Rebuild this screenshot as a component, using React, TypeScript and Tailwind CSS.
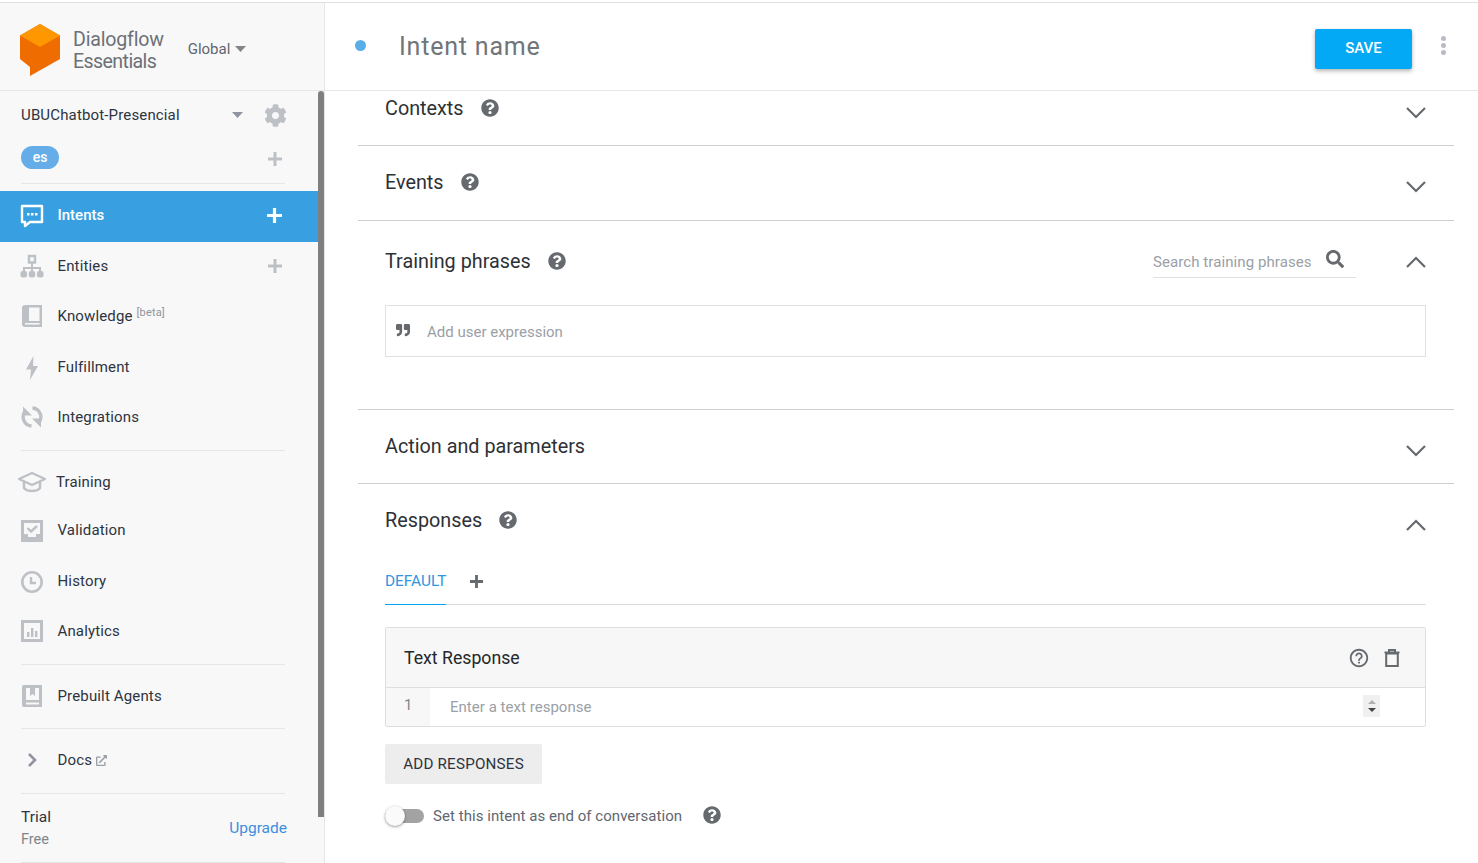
import React from "react";
import { FaCog, FaQuestionCircle, FaQuoteRight, FaSearch, FaExternalLinkAlt } from "react-icons/fa";
import { MdHelpOutline } from "react-icons/md";

const ICON = "#bdc1c6";

const Plus = ({ size = 16, color = "#bdc1c6", width = 3 }: { size?: number; color?: string; width?: number }) => (
  <svg width={size} height={size} viewBox="0 0 16 16">
    <path d="M8 1v14M1 8h14" stroke={color} strokeWidth={width} fill="none" />
  </svg>
);

const Caret = ({ color = "#80868b" }: { color?: string }) => (
  <svg width="11" height="6" viewBox="0 0 11 6">
    <path d="M0 0h11L5.5 6z" fill={color} />
  </svg>
);

const Chevron = ({ up = false }: { up?: boolean }) => (
  <svg width="20" height="12" viewBox="0 0 20 12">
    <path d={up ? "M1 11l9-9 9 9" : "M1 1l9 9 9-9"} stroke="#666a6e" strokeWidth="2.2" fill="none" />
  </svg>
);

const Logo = () => (
  <svg width="42" height="52" viewBox="0 0 42 52">
    <path d="M21 0L41 11.5V35L11 52V43L1 35V11.5z" fill="#ef6c00" />
    <path d="M21 0L41 11.5 21 23 1 11.5z" fill="#ff9800" />
  </svg>
);

const IntentIcon = () => (
  <svg width="24" height="24" viewBox="0 0 24 24">
    <path d="M2 2h20v16H10l-5 4v-4H2z" fill="none" stroke="#fff" strokeWidth="2.4" strokeLinejoin="round" />
    <path d="M7 9h2.5v2.5H7zM11 9h2.5v2.5H11zM15 9h2.5v2.5H15z" fill="#fff" />
  </svg>
);

const SitemapIcon = () => (
  <svg width="24" height="24" viewBox="0 0 24 24">
    <rect x="9" y="2" width="6" height="6.5" fill="none" stroke={ICON} strokeWidth="2.4" />
    <path d="M12 9v8M4 18v-4h16v4" fill="none" stroke={ICON} strokeWidth="2" />
    <rect x="0.5" y="17" width="6.5" height="6.5" rx="2" fill={ICON} />
    <rect x="8.75" y="17" width="6.5" height="6.5" rx="2" fill={ICON} />
    <rect x="17" y="17" width="6.5" height="6.5" rx="2" fill={ICON} />
  </svg>
);

const BookIcon = () => (
  <svg width="22" height="24" viewBox="0 0 22 24">
    <path d="M4 1h17v22H4a3 3 0 0 1-3-3V4a3 3 0 0 1 3-3z" fill={ICON} />
    <path d="M8 3.5h10.5V17H8z" fill="#f8f8f8" />
    <path d="M4 19h14.5v1.5H4z" fill="#f8f8f8" />
  </svg>
);

const BoltIcon = () => (
  <svg width="14" height="24" viewBox="0 0 14 24">
    <path d="M8.5 0L1 13.5h5L5 24l8-14H8z" fill={ICON} />
  </svg>
);

const SyncIcon = () => (
  <svg width="24" height="24" viewBox="0 0 24 24">
    <path d="M11.5 21A9 9 0 0 1 5.5 6" stroke={ICON} strokeWidth="3.4" fill="none" />
    <path d="M12.5 3A9 9 0 0 1 18.5 18" stroke={ICON} strokeWidth="3.4" fill="none" />
    <path d="M3 1.5v9h9zM21 22.5v-9h-9z" fill={ICON} />
  </svg>
);

const CapIcon = () => (
  <svg width="30" height="22" viewBox="0 0 30 22">
    <path d="M15 2L28 8 15 14 2 8z" fill="none" stroke={ICON} strokeWidth="2.2" strokeLinejoin="round" />
    <path d="M7 11v6c3 4 13 4 16 0v-6" fill="none" stroke={ICON} strokeWidth="2.4" />
  </svg>
);

const ValidationIcon = () => (
  <svg width="24" height="24" viewBox="0 0 24 24">
    <path d="M1 1h22v22H1z" fill={ICON} />
    <path d="M4 4h16v11h-4v3H8v-3H4z" fill="#f8f8f8" />
    <path d="M7.5 9l3.5 3.5L17 7" stroke={ICON} strokeWidth="2.4" fill="none" />
  </svg>
);

const ClockIcon = () => (
  <svg width="24" height="24" viewBox="0 0 24 24">
    <circle cx="12" cy="12" r="9.7" fill="none" stroke={ICON} strokeWidth="2.6" />
    <path d="M11 7v6h5" fill="none" stroke={ICON} strokeWidth="2.4" />
  </svg>
);

const AnalyticsIcon = () => (
  <svg width="24" height="24" viewBox="0 0 24 24">
    <path d="M1 1h22v22H1z" fill={ICON} />
    <path d="M4 4h16v16H4z" fill="#f8f8f8" />
    <path d="M7 13h2.4v5H7zM11 9h2.4v9H11zM15 12h2.4v6H15z" fill={ICON} />
  </svg>
);

const PrebuiltIcon = () => (
  <svg width="22" height="24" viewBox="0 0 22 24">
    <path d="M3 1h18v22H3a2 2 0 0 1-2-2V3a2 2 0 0 1 2-2z" fill={ICON} />
    <path d="M5 4h13v12H5zM5 18.5h13v2H5z" fill="#f8f8f8" />
    <path d="M9 4h5v8l-2.5-2L9 12z" fill={ICON} />
  </svg>
);

const TrashIcon = () => (
  <svg width="16" height="18" viewBox="0 0 16 18">
    <path d="M2.2 4.5h11.6V17H2.2z" fill="none" stroke="#666a6e" strokeWidth="2" />
    <path d="M0.5 3.5h15M5 3V1h6v2" fill="none" stroke="#666a6e" strokeWidth="2" />
  </svg>
);

const Divider = () => <div className="mx-[21px] h-px w-[264px] shrink-0 bg-[#e6e6e6]" />;

const NavRow = ({ icon, label, right, h = "h-[50px]", pad = "" }: { icon: React.ReactNode; label: React.ReactNode; right?: React.ReactNode; h?: string; pad?: string }) => (
  <div className={`flex ${h} ${pad} shrink-0 items-center pl-[20px] pr-[35px] text-[15px] tracking-[0.15px] text-[#2d3440]`}>
    <span className="flex w-[24px] shrink-0 justify-center">{icon}</span>
    <span className="ml-[13.5px] flex-1">{label}</span>
    {right}
  </div>
);

const Help = ({ className = "" }: { className?: string }) => (
  <FaQuestionCircle size={18} color="#666a6e" className={className} />
);

const SectionTitle = ({ title }: { title: string }) => (
  <span className="flex items-center">
    <span className="text-[19.8px] leading-[26px] text-[#2d3136]">{title}</span>
    <Help className="ml-[17px] -mt-[2px]" />
  </span>
);

export default function App() {
  return (
    <div className="flex h-[863px] w-[1478px] flex-col overflow-hidden bg-white font-['Roboto',sans-serif]">
      <div className="mt-[2px] h-px shrink-0 bg-[#e0e0e0]" />
      <div className="flex min-h-0 flex-1">
        {/* sidebar */}
        <aside className="flex w-[325px] shrink-0 flex-col border-r border-[#e6e6e6] bg-[#f8f8f8]">
          <div className="flex h-[88px] shrink-0 items-center border-b border-[#e6e6e6] pl-[19px] pt-[6px]">
            <Logo />
            <div className="ml-[12px] mt-[2px] text-[19.6px] leading-[22px] tracking-[-0.2px] text-[#6c7177]">
              Dialogflow
              <br />
              <span className="tracking-[-0.6px]">Essentials</span>
            </div>
            <span className="ml-[24px] text-[15px] text-[#5f6670]">Global</span>
            <span className="ml-[5px] mb-[1px]">
              <Caret />
            </span>
          </div>
          <div className="flex min-h-0 flex-1">
            <nav className="flex w-[318px] shrink-0 flex-col">
              <div className="flex h-[47px] shrink-0 items-end pb-[12px] pl-[21px] pr-[31px] text-[15px] tracking-[0.15px] text-[#2d3440]">
                <span className="flex-1">UBUChatbot-Presencial</span>
                <span className="mb-[8px] mr-[21px]">
                  <Caret color="#8f94a0" />
                </span>
                <FaCog size={23} color={ICON} className="-mb-[1px]" />
              </div>
              <div className="flex h-[45px] shrink-0 items-center justify-between pb-[6px] pl-[21px] pr-[35px]">
                <span className="flex h-[23px] w-[38px] items-center justify-center rounded-full bg-[#64ade8] text-[14px] font-medium text-white">es</span>
                <span className="mt-[2px] flex">
                  <Plus />
                </span>
              </div>
              <Divider />
              <div className="mt-[7px] flex h-[51px] shrink-0 items-center bg-[#389fe1] pb-[2px] pl-[20px] pr-[35px] text-[15px] font-medium text-white">
                <IntentIcon />
                <span className="ml-[13.5px] flex-1">Intents</span>
                <Plus color="#fff" size={17} />
              </div>
              <NavRow icon={<SitemapIcon />} label="Entities" right={<Plus />} pad="pb-[2px]" />
              <NavRow
                icon={<BookIcon />}
                label={
                  <>
                    Knowledge <sup className="-top-[5px] text-[11px] text-[#8f94a0]">[beta]</sup>
                  </>
                }
                pad="pb-[2px]"
              />
              <NavRow icon={<BoltIcon />} label="Fulfillment" h="h-[51px]" />
              <NavRow icon={<SyncIcon />} label="Integrations" pad="pb-[2px]" />
              <div className="mt-[7px] shrink-0">
                <Divider />
              </div>
              <div className="mt-[6px] flex h-[50px] shrink-0 items-center pl-[17px] text-[15px] tracking-[0.15px] text-[#2d3440]">
                <CapIcon />
                <span className="ml-[9px]">Training</span>
              </div>
              <div className="-mt-[2px]">
                <NavRow icon={<ValidationIcon />} label="Validation" h="h-[51px]" />
              </div>
              <NavRow icon={<ClockIcon />} label="History" h="h-[51px]" />
              <NavRow icon={<AnalyticsIcon />} label="Analytics" pad="pb-[2px]" />
              <div className="mt-[7px] shrink-0">
                <Divider />
              </div>
              <div className="mt-[6px]">
                <NavRow icon={<PrebuiltIcon />} label="Prebuilt Agents" />
              </div>
              <div className="mt-[7px] shrink-0">
                <Divider />
              </div>
              <div className="mt-[6px]">
                <NavRow
                  icon={
                    <svg width="10" height="14" viewBox="0 0 10 14">
                      <path d="M2 1l6 6-6 6" stroke="#8f94a0" strokeWidth="2.6" fill="none" />
                    </svg>
                  }
                  label={
                    <span className="flex items-center gap-[4px]">
                      Docs <FaExternalLinkAlt size={11} color="#9aa0a6" />
                    </span>
                  }
                />
              </div>
              <div className="mt-[8px] shrink-0">
                <Divider />
              </div>
              <div className="flex h-[68px] shrink-0 items-center justify-between pl-[21px] pr-[31px]">
                <div>
                  <div className="text-[15.5px] leading-[21px] text-[#2d3440]">Trial</div>
                  <div className="mt-[2px] text-[14.5px] leading-[20px] text-[#80868b]">Free</div>
                </div>
                <span className="mt-[2px] text-[15.5px] text-[#3d8fe0]">Upgrade</span>
              </div>
              <Divider />
            </nav>
            <div className="w-[6px] shrink-0">
              <div className="h-[726px] rounded-t-sm bg-[#7f7f7f]" />
            </div>
          </div>
        </aside>

        {/* main */}
        <main className="flex min-w-0 flex-1 flex-col">
          <header className="flex h-[88px] shrink-0 items-center border-b border-[#e6e6e6] pl-[30px] pr-[32px]">
            <span className="mb-[2px] h-[11px] w-[11px] rounded-full bg-[#5aaee8]" />
            <span className="ml-[33px] flex-1 text-[25px] tracking-[0.8px] text-[#70757a]">Intent name</span>
            <button className="mr-[29px] mt-[4px] h-[40px] w-[97px] rounded-[2px] bg-[#03a9f4] text-[15px] font-medium text-white shadow-[0_2px_4px_rgba(0,0,0,0.3)]">SAVE</button>
            <span className="mb-[2px] flex flex-col gap-[2px]">
              <i className="h-[5px] w-[5px] rounded-full bg-[#b9bcc4]" />
              <i className="h-[5px] w-[5px] rounded-full bg-[#b9bcc4]" />
              <i className="h-[5px] w-[5px] rounded-full bg-[#b9bcc4]" />
            </span>
          </header>

          <div className="ml-[33px] w-[1096px]">
            <section className="flex h-[55px] items-start border-b border-[#cfcfcf] pl-[27px] pr-[28px] pt-[5px]">
              <SectionTitle title="Contexts" />
              <span className="ml-auto mt-[11px]">
                <Chevron />
              </span>
            </section>
            <section className="flex h-[75px] items-start border-b border-[#cfcfcf] pl-[27px] pr-[28px] pt-[24px]">
              <SectionTitle title="Events" />
              <span className="ml-auto mt-[11px]">
                <Chevron />
              </span>
            </section>
            <section className="h-[189px] border-b border-[#cfcfcf] pl-[27px] pr-[28px]">
              <div className="flex h-[84px] items-start pt-[28px]">
                <SectionTitle title="Training phrases" />
                <div className="ml-auto flex h-[29px] w-[203px] items-start justify-between border-b border-[#e0e0e0] pr-[12px] pt-[2px]">
                  <span className="text-[15px] tracking-[0.08px] text-[#9aa0a6]">Search training phrases</span>
                  <FaSearch size={18} color="#666a6e" className="-mt-[1px]" />
                </div>
                <span className="ml-[50px] mt-[7px]">
                  <Chevron up />
                </span>
              </div>
              <div className="flex h-[52px] items-center border border-[#e0e0e0] pl-[10px]">
                <FaQuoteRight size={14} color="#666a6e" className="mb-[3px]" />
                <span className="ml-[17px] mt-[3px] text-[15px] text-[#9aa0a6]">Add user expression</span>
              </div>
            </section>
            <section className="flex h-[74px] items-start border-b border-[#cfcfcf] pl-[27px] pr-[28px] pt-[24px]">
              <span className="text-[19.8px] leading-[26px] text-[#2d3136]">Action and parameters</span>
              <span className="ml-auto mt-[11px]">
                <Chevron />
              </span>
            </section>
            <section className="pl-[27px] pr-[28px]">
              <div className="flex h-[70px] items-start pt-[24px]">
                <SectionTitle title="Responses" />
                <span className="ml-auto mt-[11px]">
                  <Chevron up />
                </span>
              </div>
              <div className="flex h-[51px] items-end border-b border-[#dcdcdc]">
                <span className="-mb-px border-b-[1px] border-[#03a9f4] pb-[13px] text-[15.4px] leading-[20px] text-[#2f96e0]">DEFAULT</span>
                <span className="mb-[15px] ml-[23px] flex">
                  <Plus size={15} color="#666a6e" />
                </span>
              </div>
              <div className="mt-[22px] rounded-[2px] border border-[#dedede]">
                <div className="flex h-[60px] items-center border-b border-[#dedede] bg-[#f7f7f7] pl-[18px] pr-[25px]">
                  <span className="mt-[2px] flex-1 text-[17.7px] text-[#23272b]">Text Response</span>
                  <MdHelpOutline size={22} color="#666a6e" />
                  <span className="ml-[14px] flex">
                    <TrashIcon />
                  </span>
                </div>
                <div className="flex h-[38px]">
                  <span className="w-[44px] bg-[#f7f7f7] pl-[18px] pt-[6px] text-[15px] text-[#80868b]">1</span>
                  <span className="flex-1 pl-[20px] pt-[8px] text-[15px] tracking-[0.03px] text-[#9aa0a6]">Enter a text response</span>
                  <span className="mr-[45px] mt-[7px] flex h-[22px] w-[17px] flex-col items-center justify-center gap-[4px] bg-[#f0f0f0]">
                    <span className="h-0 w-0 border-x-[4px] border-b-[4px] border-x-transparent border-b-[#b0b0b0]" />
                    <span className="h-0 w-0 border-x-[4px] border-t-[4px] border-x-transparent border-t-[#444]" />
                  </span>
                </div>
              </div>
              <button className="mt-[17px] block h-[40px] w-[157px] rounded-[2px] bg-[#ededed] text-[15.2px] tracking-[0.2px] text-[#2d3440]">ADD RESPONSES</button>
              <div className="mt-[20px] flex h-[24px] items-center">
                <span className="relative h-[14px] w-[39px] rounded-full bg-[#a3a3a3]">
                  <span className="absolute -top-[3px] left-0 h-[20px] w-[20px] rounded-full bg-[#fafafa] shadow-[0_1px_3px_rgba(0,0,0,0.4)]" />
                </span>
                <span className="ml-[9px] text-[15px] tracking-[0.05px] text-[#5f6670]">Set this intent as end of conversation</span>
                <Help className="mb-[3px] ml-[21px]" />
              </div>
            </section>
          </div>
        </main>
      </div>
    </div>
  );
}
